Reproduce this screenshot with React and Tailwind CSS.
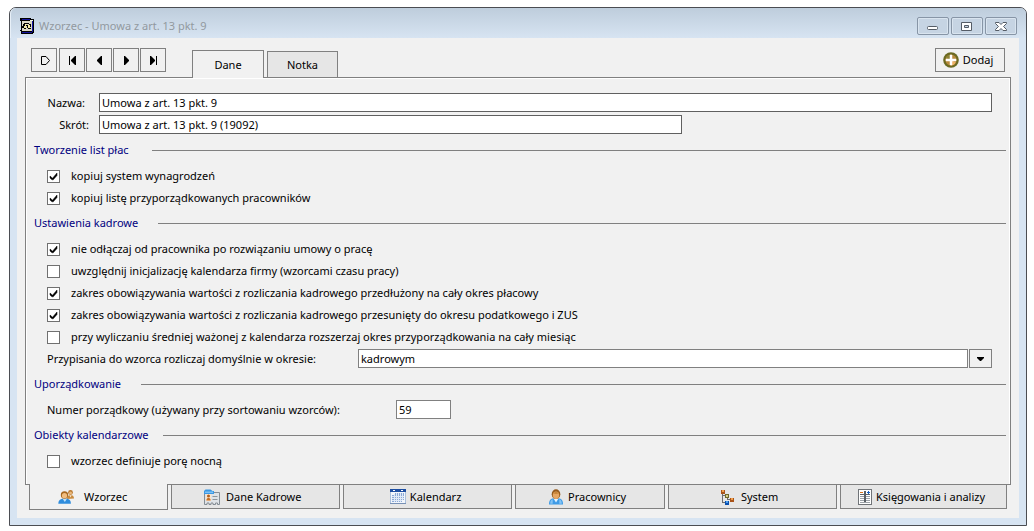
import React, { useState } from "react";

function AppIcon() {
  return (
    <svg width="15" height="16" viewBox="0 0 15 16" shapeRendering="crispEdges" aria-hidden="true">
      <path d="M0 0h11v1h3v14h-1v1H1v-3H0v-1h1V3H0z" fill="#000" />
      <path d="M2 1h8v1H2zM12 3h1v11h-1z" fill="#1414a0" />
      <path d="M10 2h3v1h-3z" fill="#f4f4e8" />
      <rect x="2" y="3" width="10" height="10" fill="#d9d6c4" />
      <path d="M4 5h5v1H4zM3 6h2v2H3zM2 8h2v2H2zM4 10h2v1H4zM6 7h2v1H6zM9 6h2v1H9zM7 8h1v2H7zM10 7h1v2h-1zM8 10h3v1H8z" fill="#000" />
      <path d="M5 6h2v1H5zM4 8h2v2H4zM8 7h2v3H8z" fill="#f3e9a0" />
      <path d="M2 14h10v1H2z" fill="#1414a0" />
    </svg>
  );
}

function AddIcon() {
  return (
    <svg width="16" height="16" viewBox="0 0 16 16" aria-hidden="true">
      <circle cx="8" cy="8" r="7.8" fill="#6b6a22" />
      <circle cx="8" cy="8" r="5.6" fill="#b98a3c" />
      <path d="M8 8L12.8 10.5A5.4 5.4 0 0 1 8 13.4z" fill="#eeb063" />
      <path d="M3 6A5.6 5.6 0 0 1 8 2.5V8z" fill="#8d8437" />
      <path d="M7 3h2v4h4v2H9v4H7V9H3V7h4z" fill="#fff" stroke="#fff" strokeWidth="0.500" />
    </svg>
  );
}

function PeopleIcon() {
  return (
    <svg width="16" height="16" viewBox="0 0 16 16" aria-hidden="true">
      <circle cx="12.500" cy="3.500" r="2.400" fill="#b9782e" />
      <circle cx="12.500" cy="3.900" r="1.500" fill="#e9b779" />
      <path d="M9 10c0-3 1.500-4 3.500-4S16 7 16 9.500z" fill="#c98b3f" />
      <path d="M11.500 6.200h2l-1 2.300z" fill="#f5ead8" />
      <path d="M.3 14.800C.4 11 2.500 9.600 6.800 9.600s6 1.600 6.100 5.200z" fill="#2f8ddd" />
      <path d="M4.600 9.800h4.400L6.800 13z" fill="#bfe1fa" />
      <circle cx="6.500" cy="6" r="3.700" fill="#a8681f" />
      <circle cx="6.500" cy="6.700" r="2.600" fill="#f0bd80" />
    </svg>
  );
}

function PersonnelIcon() {
  return (
    <svg width="16" height="16" viewBox="0 0 16 16" aria-hidden="true">
      <path d="M.5 4h8.500V3.500h6.500v12h-2v-1.500h-2v1.500h-2.500v-1.500h-2v1.500h-2v-1.500h-2v1.500H.5z" fill="#dfe3e7" stroke="#858d95" />
      <path d="M0 2L1.500.500h5L8.500 2H10v3H0z" fill="#3b97e3" />
      <path d="M1 2.500h8V4H1z" fill="#7cc2f6" />
      <rect x="2" y="5" width="5" height="7" fill="#fbe5ce" />
      <circle cx="4.500" cy="7" r="1.500" fill="#b25e1a" />
      <path d="M2.300 11.500C2.500 9.500 3.500 9 4.500 9s2 .5 2.200 2.500z" fill="#c76f22" />
      <path d="M8.500 7.500h5M8.500 10.500h5" stroke="#8d949b" />
    </svg>
  );
}

function CalendarIcon() {
  return (
    <svg width="16" height="16" viewBox="0 0 16 16" shapeRendering="crispEdges" aria-hidden="true">
      <rect width="16" height="15" y="0" fill="#a9bfdc" />
      <rect x="1" y="3" width="14" height="11" fill="#f2f6fc" />
      <rect width="16" height="3" fill="#1c4da1" />
      <path d="M3 1h2v1H3zM11 1h2v1h-2z" fill="#fff" />
      <path d="M5 4h9v7H5zM2 6h3v7H2zM5 11h7v2H5z" fill="#8ba9d6" />
      <path d="M2 7.500h12M2 9.500h12M2 11.500h10M4.500 5v8M6.500 4v9M8.500 4v9M10.500 4v9M12.500 4v7" stroke="#dfe9f7" />
      <path d="M0 14h16v1H0z" fill="#7891b5" />
    </svg>
  );
}

function WorkerIcon() {
  return (
    <svg width="16" height="16" viewBox="0 0 16 16" aria-hidden="true">
      <path d="M1 15.500C1 11.500 2 9 8 9s7 2.500 7 6.500z" fill="#3f9be6" />
      <path d="M2.200 14.700c0-2.500.8-4 2.500-4.500v4.500zM13.800 14.700c0-2.500-.8-4-2.500-4.500v4.500z" fill="#84c4f5" />
      <path d="M5.300 9.300h5.400L8 13.500z" fill="#e3f3ff" />
      <ellipse cx="8" cy="5.200" rx="4.300" ry="4.900" fill="#955a1c" />
      <ellipse cx="8" cy="6.300" rx="3.200" ry="3.700" fill="#e5a764" />
      <path d="M5 4.500C6 2.500 10 2.500 11 4.500L8 5z" fill="#c78538" />
    </svg>
  );
}

function TreeIcon() {
  return (
    <svg width="14" height="16" viewBox="0 0 14 16" shapeRendering="crispEdges" aria-hidden="true">
      <path d="M1.500 4v9.500H5M1.500 6.500H5M6.500 8v2.500h3" stroke="#6d6d6d" fill="none" />
      <rect x="0" y="1" width="4" height="4" fill="#a9541a" />
      <rect x="1" y="1" width="2" height="2" fill="#f0a04e" />
      <rect x="4" y="5" width="4" height="4" fill="#6f6a2a" />
      <rect x="5" y="6" width="2" height="2" fill="#d9cf8c" />
      <rect x="9" y="9" width="4" height="4" fill="#a9541a" />
      <rect x="10" y="9" width="2" height="2" fill="#f0a04e" />
      <rect x="4" y="12" width="4" height="4" fill="#0b4fae" />
      <rect x="5" y="12" width="2" height="2" fill="#4aa0f0" />
    </svg>
  );
}

function LedgerIcon() {
  return (
    <svg width="14" height="16" viewBox="0 0 14 16" shapeRendering="crispEdges" aria-hidden="true">
      <rect x="0.500" y="0.500" width="13" height="15" fill="#fff" stroke="#707478" />
      <path d="M2 7h4v1H2zM8 7h4v1H8zM2 9h4v1H2zM8 9h4v1H8zM2 11h4v1H2zM8 11h4v1H8zM2 13h10v1H2z" fill="#9da3a8" />
      <path d="M2 5h10v1H2zM6 2h2v11H6z" fill="#5a6066" />
      <path d="M2 3h3v1H2z" fill="#d9731a" />
      <path d="M9 3h3v1H9zM10 2h1v3h-1z" fill="#1a62c0" />
    </svg>
  );
}

const NAV = [
  { label: "Nowy", shape: <path d="M2.500 1.500H7L10.500 5.500 7 9.500H2.500z" fill="none" stroke="#000" /> },
  { label: "Pierwszy", shape: <path d="M2 1h1v9H2zM9 1v9H8L4 6V5l4-4z" fill="#000" /> },
  { label: "Poprzedni", shape: <path d="M8 1v9H7L3 6V5l4-4z" fill="#000" /> },
  { label: "Następny", shape: <path d="M3 1v9h1l4-4V5L4 1z" fill="#000" /> },
  { label: "Ostatni", shape: <path d="M2 1v9h1l4-4V5L3 1zM8 1h1v9H8z" fill="#000" /> },
];

const WINDOW_BUTTONS = [
  { label: "Minimalizuj", shape: <rect x="1.500" y="5.500" width="10" height="3" rx="1" /> },
  { label: "Maksymalizuj", shape: <path d="M1.500 1.500h10v8h-10zM4.500 4.500h4v2h-4z" fillRule="evenodd" /> },
  { label: "Zamknij", shape: <path d="M1.500 1.500h3.500L7 3.500l2-2h3.500v1L9.500 5.500l3 3v1H9l-2-2-2 2H1.500v-1l3-3-3-3z" /> },
];

const BOTTOM_TABS = [
  { label: "Wzorzec", icon: <PeopleIcon />, box: "gap-2.5 pr-3", grow: "flex-[139_1_0px]" },
  { label: "Dane Kadrowe", icon: <PersonnelIcon />, box: "gap-1.5 pr-1.5", grow: "flex-[169_1_0px]" },
  { label: "Kalendarz", icon: <CalendarIcon />, box: "gap-1 pr-1", grow: "flex-[169_1_0px]" },
  { label: "Pracownicy", icon: <WorkerIcon />, box: "gap-1 pr-1.5", grow: "flex-[150_1_0px]" },
  { label: "System", icon: <TreeIcon />, box: "gap-1.5 pr-1.5", grow: "flex-[169_1_0px]" },
  { label: "Księgowania i analizy", icon: <LedgerIcon />, box: "gap-1 pr-1", grow: "flex-[167_1_0px]" },
];

function Check({ label, defaultChecked = false }) {
  return (
    <label className="flex h-[21px] items-center gap-[11px]">
      <span className="grid size-[13px] shrink-0">
        <input
          type="checkbox"
          defaultChecked={defaultChecked}
          className="peer col-start-1 row-start-1 size-[13px] appearance-none border border-[#707070] bg-white"
        />
        <svg
          viewBox="0 0 13 13"
          className="pointer-events-none invisible col-start-1 row-start-1 size-[13px] peer-checked:visible"
          aria-hidden="true"
        >
          <path d="M3 6l2.500 2.200L10 3v2.500L6.200 9.800H5L3 8z" fill="#000" stroke="#000" strokeWidth="0.500" />
        </svg>
      </span>
      <span className="pb-0.5">{label}</span>
    </label>
  );
}

function Section({ title, titleWidth, gap = "pt-1.5", children }) {
  return (
    <section className={gap}>
      <div className="flex h-[21px] items-center pr-1 pl-2">
        <h2 className={`pb-0.5 text-[#000080] ${titleWidth}`}>{title}</h2>
        <span className="h-px flex-1 bg-[#808080]" />
      </div>
      <div className="flex flex-col gap-px pt-[5px] pr-[18px] pl-[21px]">{children}</div>
    </section>
  );
}

export default function App() {
  const [topTab, setTopTab] = useState("Dane");
  const [bottomTab, setBottomTab] = useState("Wzorzec");

  return (
    <div className="flex min-h-screen flex-col bg-white pt-[7px] pr-[7px] pb-[5px] pl-[9px] font-['Noto_Sans','Open_Sans',sans-serif] text-[11px] leading-4 text-black">
      <div className="flex flex-1 flex-col rounded-t-[7px] border border-[#4b4d52] bg-[#d7e4f2] px-[7px] pb-[7px]">
        <header className="-mx-[7px] flex h-[30px] items-center rounded-t-md border-l border-[#e8f0f8] bg-linear-to-b from-[#becddc] to-[#d7e4f2] pt-1.5 pr-[9px] pl-[9px]">
          <AppIcon />
          <h1 className="flex-1 pl-1 text-[#92999f]">Wzorzec - Umowa z art. 13 pkt. 9</h1>
          <div className="flex gap-0.5">
            {WINDOW_BUTTONS.map((b) => (
              <button
                key={b.label}
                aria-label={b.label}
                className="flex h-[18px] w-8 items-center justify-center rounded-xs border border-[#8795a6] bg-[#c6d4e3] inset-ring inset-ring-[#d9e4ef]"
              >
                <svg width="14" height="11" viewBox="0 0 14 11" fill="#fff" stroke="#555c66" aria-hidden="true">
                  {b.shape}
                </svg>
              </button>
            ))}
          </div>
        </header>

        <main className="flex flex-1 flex-col bg-[#f1f1f1] px-2 pb-2">
          <div className="flex h-[39px] items-start pr-1.5 pl-1.5">
            <div className="flex gap-px pt-2.5">
              {NAV.map((n) => (
                <button
                  key={n.label}
                  aria-label={n.label}
                  className="flex h-6 w-[26px] items-center justify-center border border-[#808080] first:mr-px"
                >
                  <svg width="11" height="11" viewBox="0 0 11 11" aria-hidden="true">
                    {n.shape}
                  </svg>
                </button>
              ))}
            </div>
            <div role="tablist" className="flex items-end gap-[3px] self-end pl-[26px]">
              {["Dane", "Notka"].map((t) => (
                <button
                  key={t}
                  role="tab"
                  aria-selected={topTab === t}
                  onClick={() => setTopTab(t)}
                  className={
                    topTab === t
                      ? "relative z-10 -mb-px h-7 w-[72px] border border-b-0 border-[#808080] bg-[#f1f1f1]"
                      : "h-[26px] w-[71px] border border-b-0 border-[#808080] bg-[#e6e6e6]"
                  }
                >
                  {t}
                </button>
              ))}
            </div>
            <div className="ml-auto pt-2.5">
              <button className="flex h-6 w-[70px] items-center justify-center gap-1 border border-[#808080] pr-1">
                <AddIcon />
                Dodaj
              </button>
            </div>
          </div>

          <form className="flex-1 border border-[#808080] pb-3 shadow-[inset_1px_1px_0_#fff,inset_-1px_0_0_#fff]">
            <div className="flex flex-col gap-[3px] pt-[15px] pr-[18px]">
              <div className="flex h-[19px] items-center">
                <label htmlFor="nazwa" className="w-[73px] pr-3.5 text-right">Nazwa:</label>
                <input id="nazwa" defaultValue="Umowa z art. 13 pkt. 9" className="h-[19px] min-w-0 flex-1 border border-[#606060] bg-white px-0.5" />
              </div>
              <div className="flex h-[19px] items-center">
                <label htmlFor="skrot" className="w-[73px] pr-2.5 text-right">Skrót:</label>
                <input id="skrot" defaultValue="Umowa z art. 13 pkt. 9 (19092)" className="h-[19px] w-[583px] border border-[#606060] bg-white px-0.5" />
              </div>
            </div>

            <Section title="Tworzenie list płac" titleWidth="w-[118px]">
              <Check defaultChecked label="kopiuj system wynagrodzeń" />
              <Check defaultChecked label="kopiuj listę przyporządkowanych pracowników" />
            </Section>

            <Section title="Ustawienia kadrowe" titleWidth="w-[124px]" gap="pt-1">
              <Check defaultChecked label="nie odłączaj od pracownika po rozwiązaniu umowy o pracę" />
              <Check label="uwzględnij inicjalizację kalendarza firmy (wzorcami czasu pracy)" />
              <Check defaultChecked label="zakres obowiązywania wartości z rozliczania kadrowego przedłużony na cały okres płacowy" />
              <Check defaultChecked label="zakres obowiązywania wartości z rozliczania kadrowego przesunięty do okresu podatkowego i ZUS" />
              <Check label="przy wyliczaniu średniej ważonej z kalendarza rozszerzaj okres przyporządkowania na cały miesiąc" />
              <div className="flex h-[19px] items-center">
                <label htmlFor="okres" className="w-[311px]">Przypisania do wzorca rozliczaj domyślnie w okresie:</label>
                <div className="grid h-[19px] flex-1">
                  <select id="okres" className="col-start-1 row-start-1 w-full appearance-none border border-[#808080] bg-white px-0.5">
                    <option>kadrowym</option>
                  </select>
                  <span className="pointer-events-none col-start-1 row-start-1 flex justify-self-end border-l border-[#808080] bg-[#f1f1f1] pl-px">
                    <span className="flex w-[23px] items-center justify-center border border-[#808080]">
                      <svg width="7" height="4" viewBox="0 0 7 4" aria-hidden="true">
                        <path d="M0 0h7v1L4 4H3L0 1z" />
                      </svg>
                    </span>
                  </span>
                </div>
              </div>
            </Section>

            <Section title="Uporządkowanie" titleWidth="w-[107px]">
              <div className="flex h-[19px] items-center">
                <label htmlFor="numer" className="w-[349px]">Numer porządkowy (używany przy sortowaniu wzorców):</label>
                <input id="numer" defaultValue="59" className="h-[19px] w-[55px] border border-[#808080] bg-white px-0.5" />
              </div>
            </Section>

            <Section title="Obiekty kalendarzowe" titleWidth="w-[129px]">
              <Check label="wzorzec definiuje porę nocną" />
            </Section>
          </form>

          <div role="tablist" className="flex h-[25px] items-start gap-[3px] px-1">
            {BOTTOM_TABS.map((t) => (
              <button
                key={t.label}
                role="tab"
                aria-selected={bottomTab === t.label}
                onClick={() => setBottomTab(t.label)}
                className={`border border-t-0 border-[#808080] ${t.grow} ${
                  bottomTab === t.label ? "relative z-10 -mt-px h-[26px] bg-[#f1f1f1]" : "h-6 bg-[#e6e6e6]"
                }`}
              >
                <span className={`flex items-center justify-center whitespace-nowrap ${t.box}`}>
                  {t.icon}
                  {t.label}
                </span>
              </button>
            ))}
          </div>
        </main>
      </div>
    </div>
  );
}
